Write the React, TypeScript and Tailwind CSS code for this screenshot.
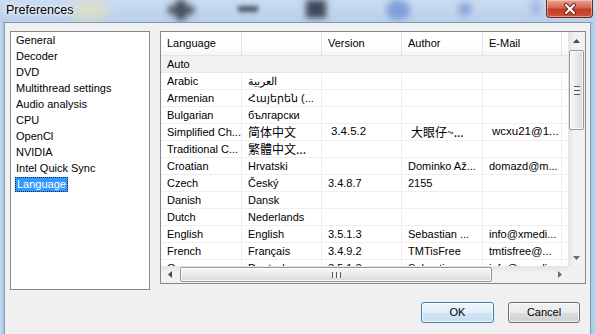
import React from "react";

const colW = ["w-[81px]", "w-[80px]", "w-[80px]", "w-[81px]", "w-[79px]"];

type Row = { c: string[]; cjk?: boolean };

const rows: Row[] = [
  { c: ["Arabic", "العربية", "", "", ""] },
  { c: ["Armenian", "Հայերեն (...", "", "", ""] },
  { c: ["Bulgarian", "български", "", "", ""] },
  { c: ["Simplified Ch...", "简体中文", "3.4.5.2", "大眼仔~...", "wcxu21@1..."], cjk: true },
  { c: ["Traditional C...", "繁體中文...", "", "", ""], cjk: true },
  { c: ["Croatian", "Hrvatski", "", "Dominko Až...", "domazd@m..."] },
  { c: ["Czech", "Český", "3.4.8.7", "2155", ""] },
  { c: ["Danish", "Dansk", "", "", ""] },
  { c: ["Dutch", "Nederlands", "", "", ""] },
  { c: ["English", "English", "3.5.1.3", "Sebastian ...", "info@xmedi..."] },
  { c: ["French", "Français", "3.4.9.2", "TMTisFree", "tmtisfree@..."] },
  { c: ["German", "Deutsch", "3.5.1.3", "Sebastian ...", "info@xmedi..."] },
];

const menu = [
  "General",
  "Decoder",
  "DVD",
  "Multithread settings",
  "Audio analysis",
  "CPU",
  "OpenCl",
  "NVIDIA",
  "Intel Quick Sync",
];

function TitleBar() {
  return (
    <div className="relative h-[22px] flex items-start justify-between bg-[linear-gradient(180deg,#cadcf1,#b8d0eb)] overflow-hidden">
      <div className="absolute left-[70px] top-[2px] w-[40px] h-[18px] rounded-full bg-[#e6e2b8] opacity-70 blur-[6px]" />
      <div className="absolute left-[168px] top-[6px] w-[26px] h-[8px] bg-[#46505e] blur-[3px]" />
      <div className="absolute left-[176px] top-[0px] w-[10px] h-[20px] bg-[#46505e] blur-[3px]" />
      <div className="absolute left-[238px] top-[6px] w-[20px] h-[6px] bg-[#4d5866] blur-[2px]" />
      <div className="absolute left-[306px] top-[0px] w-[20px] h-[18px] bg-[#3c4858] blur-[3px]" />
      <div className="absolute left-[386px] top-[0px] w-[24px] h-[20px] rounded-full bg-[#7390d6] opacity-80 blur-[3px]" />
      <div className="absolute left-[458px] top-[2px] w-[14px] h-[14px] rounded-full bg-[#7f9ad8] opacity-80 blur-[3px]" />
      <div className="absolute left-[531px] top-[0px] w-[10px] h-[16px] bg-[#9cb4e4] opacity-80 blur-[3px]" />
      <div className="relative pl-[6px] pt-[2px] text-[12.5px] text-black leading-[16px] [text-shadow:0_0_6px_#ffffff,0_0_3px_#ffffff]">
        Preferences
      </div>
      <div className="relative mr-[3px] w-[47px] h-[18px] rounded-b-[4px] border border-t-0 border-[#6e2a20] bg-[linear-gradient(180deg,#e8a595,#d6674f_45%,#c23c26_55%,#cf523a)] shadow-[inset_0_0_0_1px_rgba(255,220,210,0.5)] flex items-center justify-center">
        <svg width="14" height="12" viewBox="0 0 14 12">
          <path d="M3 2 L11 10 M11 2 L3 10" stroke="#6b2218" strokeWidth="4" strokeLinecap="round" />
          <path d="M3 2 L11 10 M11 2 L3 10" stroke="#ffffff" strokeWidth="2.2" strokeLinecap="round" />
        </svg>
      </div>
    </div>
  );
}

function VScroll() {
  return (
    <div className="w-[17px] h-full flex flex-col bg-[linear-gradient(90deg,#e4e4e4,#f2f2f2_40%,#f2f2f2)]">
      <div className="h-[17px] flex items-center justify-center">
        <svg width="7" height="4" viewBox="0 0 7 4">
          <path d="M3.5 0 L7 4 L0 4 Z" fill="#4a4a4a" />
        </svg>
      </div>
      <div className="mx-[1px] mt-[1px] h-[80px] rounded-[2px] border border-[#979797] bg-[linear-gradient(90deg,#f7f7f7,#ececec_45%,#d9d9d9)] shadow-[inset_0_0_0_1px_rgba(255,255,255,0.8)] flex flex-col items-center justify-center gap-[1px]">
        <div className="w-[6px] h-[1px] bg-[#5a5a5a]" />
        <div className="w-[6px] h-[1px] bg-[#ffffff]" />
        <div className="w-[6px] h-[1px] bg-[#5a5a5a]" />
        <div className="w-[6px] h-[1px] bg-[#ffffff]" />
        <div className="w-[6px] h-[1px] bg-[#5a5a5a]" />
      </div>
      <div className="flex-1" />
      <div className="h-[17px] flex items-center justify-center">
        <svg width="7" height="4" viewBox="0 0 7 4">
          <path d="M0 0 L7 0 L3.5 4 Z" fill="#6a6a6a" />
        </svg>
      </div>
    </div>
  );
}

function HScroll() {
  return (
    <div className="w-[407px] h-[17px] flex bg-[linear-gradient(180deg,#e4e4e4,#f2f2f2_40%,#f2f2f2)]">
      <div className="w-[17px] h-full flex items-center justify-center">
        <svg width="4" height="7" viewBox="0 0 4 7">
          <path d="M4 0 L4 7 L0 3.5 Z" fill="#4a4a4a" />
        </svg>
      </div>
      <div className="ml-[2px] my-[1px] w-[312px] rounded-[2px] border border-[#979797] bg-[linear-gradient(180deg,#f7f7f7,#ececec_45%,#d9d9d9)] shadow-[inset_0_0_0_1px_rgba(255,255,255,0.8)] flex items-center justify-center gap-[1px]">
        <div className="w-[1px] h-[6px] bg-[#5a5a5a]" />
        <div className="w-[1px] h-[6px] bg-[#ffffff]" />
        <div className="w-[1px] h-[6px] bg-[#5a5a5a]" />
        <div className="w-[1px] h-[6px] bg-[#ffffff]" />
        <div className="w-[1px] h-[6px] bg-[#5a5a5a]" />
      </div>
      <div className="flex-1" />
      <div className="w-[17px] h-full flex items-center justify-center">
        <svg width="4" height="7" viewBox="0 0 4 7">
          <path d="M0 0 L4 3.5 L0 7 Z" fill="#6a6a6a" />
        </svg>
      </div>
    </div>
  );
}

function Table() {
  const headers = ["Language", "", "Version", "Author", "E-Mail"];
  return (
    <div className="w-[426px] h-[253px] border border-[#828790] bg-white flex flex-col">
      <div className="flex h-[234px]">
        <div className="w-[407px] h-full overflow-hidden">
          <div className="flex h-[24px] bg-[linear-gradient(180deg,#ffffff,#ffffff_55%,#f4f5f7)] border-b border-[#e3e3e3]">
            {headers.map((h, i) => (
              <div
                key={i}
                className={`${colW[i]} h-full flex items-center pl-[6px] border-r border-[#e3e3e3] whitespace-nowrap`}
              >
                {h}
              </div>
            ))}
            <div className="flex-1" />
          </div>
          <div className="h-[17px] flex items-center pl-[6px] bg-[#f1f1f1] border-b border-[#e8e8e8]">
            Auto
          </div>
          {rows.map((r, ri) => (
            <div key={ri} className="flex h-[17px] border-b border-[#efefef]">
              {r.c.map((t, i) => {
                const isCjk = r.cjk && (i === 1 || i === 3);
                const pad = r.cjk && i >= 2 ? "pl-[9px]" : "pl-[6px]";
                return (
                  <div
                    key={i}
                    className={`${colW[i]} h-full flex items-center ${pad} border-r border-[#ededed] overflow-hidden whitespace-nowrap ${
                      isCjk
                        ? "font-['Noto_Sans_CJK_SC',sans-serif] text-[12px] leading-[12px]"
                        : r.cjk && i >= 2
                        ? "text-[11.5px]"
                        : ""
                    }`}
                  >
                    {t}
                  </div>
                );
              })}
              <div className="flex-1" />
            </div>
          ))}
        </div>
        <VScroll />
      </div>
      <div className="flex h-[17px]">
        <HScroll />
        <div className="w-[17px] h-full bg-[#f0f0f0]" />
      </div>
    </div>
  );
}

function ListBox() {
  return (
    <div className="w-[140px] h-[259px] border border-[#828790] bg-white flex flex-col">
      {menu.map((m) => (
        <div key={m} className="h-[16px] flex items-center pl-[5px] whitespace-nowrap">
          {m}
        </div>
      ))}
      <div className="h-[16px] flex items-center pl-[4px]">
        <span className="h-[15px] inline-flex items-center px-[1px] bg-[#3399ff] text-white border border-dotted border-[#0f2a4d]">
          Language
        </span>
      </div>
    </div>
  );
}

export default function App() {
  return (
    <div className="w-[596px] h-[334px] overflow-hidden flex flex-col bg-[#b8d0eb] text-[11px] text-black font-['Liberation_Sans',Arial,sans-serif]">
      <TitleBar />
      <div className="flex flex-1 min-h-0">
        <div className="w-[4px] bg-[linear-gradient(90deg,#c3d8ef,#a9c5e6)]" />
        <div className="flex-1 bg-[#f0f0f0] border-l border-t border-r border-[#8198b6] flex flex-col pt-[8px] pl-[5px] pr-[4px]">
          <div className="flex items-start gap-[10px]">
            <ListBox />
            <Table />
          </div>
          <div className="mt-[12px] pr-[6px] flex justify-end gap-[14px]">
            <div className="w-[73px] h-[21px] rounded-[3px] border border-[#3c7fb1] bg-[linear-gradient(180deg,#eef6fc,#e3eff9_50%,#d2e5f4_51%,#c7ddef)] shadow-[inset_0_0_0_1px_rgba(255,255,255,0.75)] flex items-center justify-center">
              OK
            </div>
            <div className="w-[72px] h-[21px] rounded-[3px] border border-[#707070] bg-[linear-gradient(180deg,#f2f2f2,#ebebeb_50%,#dddddd_51%,#cfcfcf)] shadow-[inset_0_0_0_1px_rgba(255,255,255,0.75)] flex items-center justify-center">
              Cancel
            </div>
          </div>
        </div>
        <div className="w-[5px] bg-[linear-gradient(90deg,#a9c5e6,#c3d8ef)]" />
      </div>
    </div>
  );
}
